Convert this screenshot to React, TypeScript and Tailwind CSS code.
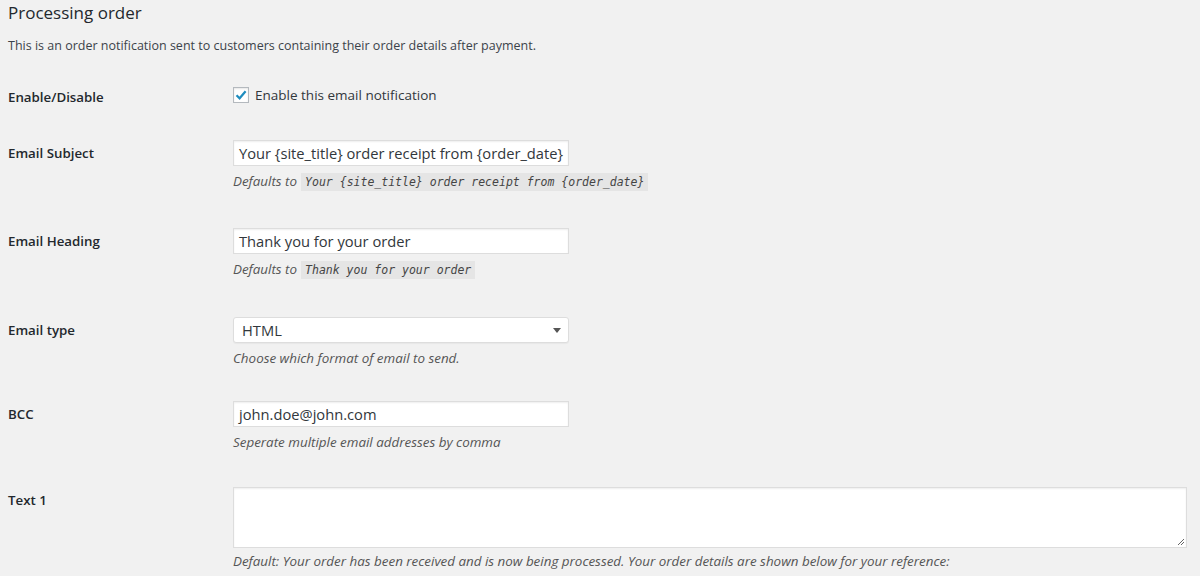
import React from 'react';

const FONT = { fontFamily: '"Open Sans", "Liberation Sans", sans-serif' };

function Code({ children }: { children: React.ReactNode }) {
  return (
    <code className="ml-[4px] bg-[#e5e5e5] px-[4px] py-[2px] text-[11.5px] italic text-[#444]" style={{ fontFamily: '"DejaVu Sans Mono", "Liberation Mono", monospace' }}>
      {children}
    </code>
  );
}

function Desc({ children }: { children: React.ReactNode }) {
  return <p className="mt-[6px] text-[13.4px] leading-[18px] italic text-[#555]">{children}</p>;
}

function Row({ label, children, pad = 'pt-[18px] pb-[19px]' }: { label: string; children: React.ReactNode; pad?: string }) {
  return (
    <div className={`flex ${pad}`}>
      <div className="w-[225px] shrink-0 text-[13.3px] font-semibold leading-[26px] text-[#23282d]">{label}</div>
      <div className="flex-1">{children}</div>
    </div>
  );
}

function TextInput({ value }: { value: string }) {
  return (
    <div className="flex h-[26px] w-[336px] items-center whitespace-nowrap border border-[#ddd] bg-white px-[5px] text-[14.7px] text-[#32373c] shadow-[inset_0_1px_2px_rgba(0,0,0,0.07)]">
      {value}
    </div>
  );
}

export default function App() {
  return (
    <div className="min-h-[576px] bg-[#f1f1f1] pl-[8px] pr-[13px] text-[#23282d]" style={FONT}>
      <h2 className="text-[17px] font-normal leading-[26px]">Processing order</h2>
      <p className="mt-[10px] mb-[13px] text-[12.5px] leading-[20px] text-[#3c434a]">
        This is an order notification sent to customers containing their order details after payment.
      </p>

      <div className="flex">
        <div className="w-[225px] shrink-0 pt-[18px] text-[13.3px] font-semibold leading-[20px]">Enable/Disable</div>
        <div className="flex items-center pt-[18px] pb-[19px]">
          <span className="flex h-[16px] w-[16px] items-center justify-center border border-[#b4b9be] bg-white shadow-[inset_0_1px_2px_rgba(0,0,0,0.1)]">
            <svg width="14" height="14" viewBox="0 0 14 14">
              <path d="M2.5 7.2 L5.6 10.3 L11.6 3.2" fill="none" stroke="#1e8cbe" strokeWidth="2.2" />
            </svg>
          </span>
          <span className="ml-[6px] text-[13.5px] leading-[16px] text-[#32373c]">Enable this email notification</span>
        </div>
      </div>

      <Row label="Email Subject">
        <TextInput value="Your {site_title} order receipt from {order_date}" />
        <Desc>
          Defaults to<Code>Your {'{site_title}'} order receipt from {'{order_date}'}</Code>
        </Desc>
      </Row>

      <Row label="Email Heading" pad="pt-[18px] pb-[19px]">
        <TextInput value="Thank you for your order" />
        <Desc>
          Defaults to<Code>Thank you for your order</Code>
        </Desc>
      </Row>

      <Row label="Email type" pad="pt-[19px] pb-[17px]">
        <div className="flex h-[26px] w-[336px] items-center justify-between rounded-[3px] border border-[#ddd] bg-white pl-[8px] pr-[7px] text-[14.7px] text-[#32373c] shadow-[0_1px_1px_rgba(0,0,0,0.04)]">
          <span>HTML</span>
          <svg width="8" height="5" viewBox="0 0 8 5">
            <path d="M0 0 H8 L4 5 Z" fill="#555" />
          </svg>
        </div>
        <Desc>Choose which format of email to send.</Desc>
      </Row>

      <Row label="BCC" pad="pt-[17px] pb-[18px]">
        <TextInput value="john.doe@john.com" />
        <Desc>Seperate multiple email addresses by comma</Desc>
      </Row>

      <Row label="Text 1" pad="pt-[18px] pb-[18px]">
        <div className="relative h-[61px] w-[954px] border border-[#ddd] bg-white shadow-[inset_0_1px_2px_rgba(0,0,0,0.07)]">
          <svg className="absolute right-[2px] bottom-[2px]" width="7" height="7" viewBox="0 0 7 7">
            <path d="M1 7 L7 1 M4 7 L7 4" stroke="#666" strokeWidth="1" />
          </svg>
        </div>
        <p className="mt-[4px] text-[13.4px] leading-[18px] italic text-[#555]">
          Default: Your order has been received and is now being processed. Your order details are shown below for your reference:
        </p>
      </Row>
    </div>
  );
}
